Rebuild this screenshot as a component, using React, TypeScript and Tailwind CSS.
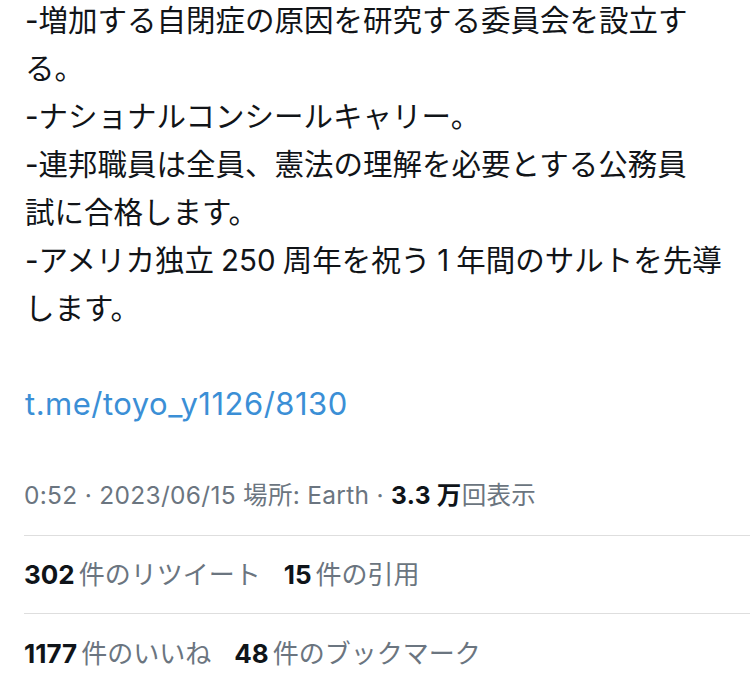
const bodyFont = { fontFamily: '"Inter", "Noto Sans CJK JP", sans-serif' };

const Stat = ({ n, label }: { n: string; label: string }) => (
    <span className="mr-[23px]">
        <span className="font-bold text-[#0f1419]">{n}</span>
        <span className="ml-[4px] text-[#6b7580]">{label}</span>
    </span>
);

export default function App() {
    return (
        <div className="w-[750px] h-[691px] bg-white overflow-hidden" style={bodyFont}>
            <div className="-mt-1 px-[25px] text-[29.5px] leading-[48px] text-[#111418]">
                <p className="whitespace-nowrap">
                    -増加する自閉症の原因を研究する委員会を設立す
                    <br />
                    る。
                    <br />
                    -ナショナルコンシールキャリー。
                    <br />
                    -連邦職員は全員、憲法の理解を必要とする公務員
                    <br />
                    試に合格します。
                    <br />
                    -アメリカ独立<span className="mx-[7px]">250</span>周年を祝う<span className="mx-[7px]">1</span>年間のサルトを先導
                    <br />
                    します。
                </p>
                <p className="mt-12 text-[31px] tracking-[0.5px] text-[#3b8fd6]">t.me/toyo_y1126/8130</p>
            </div>

            <div className="ml-6 border-b border-[#dedede] pt-[51px] pb-6 text-[24.5px] leading-8 tracking-[0.3px] text-[#6b7580] whitespace-nowrap">
                <span>0:52 · 2023/06/15 場所: Earth · </span>
                <span className="font-bold text-[#0f1419]">3.3 万</span>
                <span>回表示</span>
            </div>

            <div className="ml-6 border-b border-[#dedede] pt-[23px] pb-[22px] text-[26px] leading-8 whitespace-nowrap">
                <Stat n="302" label="件のリツイート" />
                <Stat n="15" label="件の引用" />
            </div>

            <div className="ml-6 pt-6 text-[26px] leading-8 whitespace-nowrap">
                <Stat n="1177" label="件のいいね" />
                <Stat n="48" label="件のブックマーク" />
            </div>
        </div>
    );
}
